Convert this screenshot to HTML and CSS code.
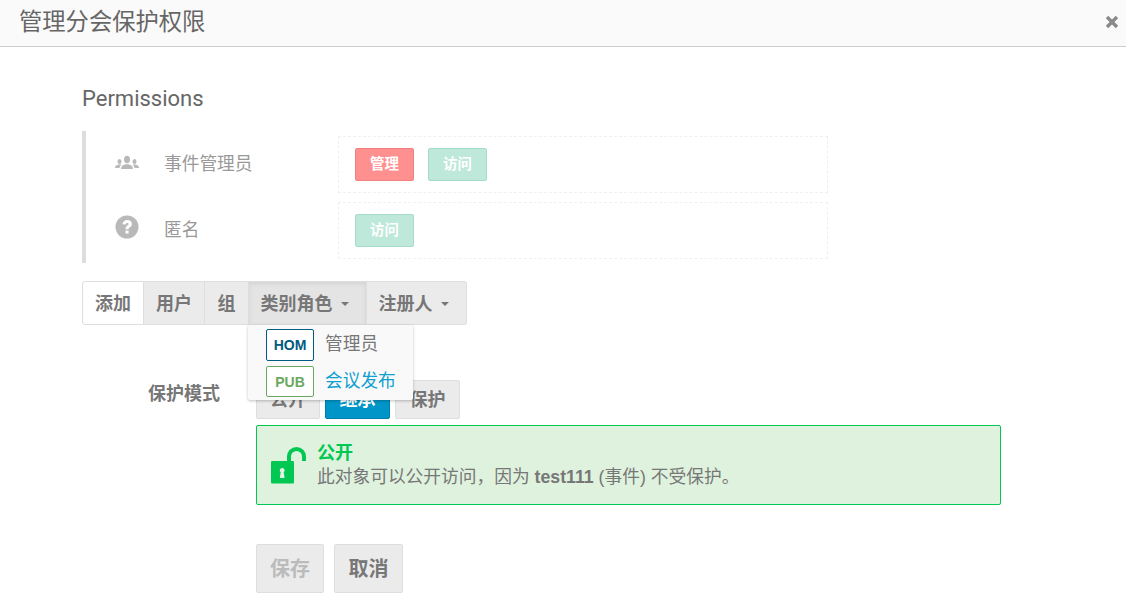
FILE: index.html
```html
<!DOCTYPE html>
<html lang="zh">
<head>
<meta charset="utf-8">
<title>管理分会保护权限</title>
<link rel="stylesheet" href="styles.css">
</head>
<body>
<header class="top">
  <h1 class="top-title">管理分会保护权限</h1>
  <span class="top-close">
    <svg width="14" height="14" viewBox="0 0 14 14"><path d="M3.2 .8 7 4.6 10.8 .8 13.2 3.2 9.4 7 13.2 10.8 10.8 13.2 7 9.4 3.2 13.2 .8 10.8 4.6 7 .8 3.2Z" fill="#8a8a8a"/></svg>
  </span>
</header>
<main class="body">
  <h2 class="perm-title">Permissions</h2>
  <div class="perm-list">
    <div class="perm-row">
      <span class="perm-icon">
        <svg width="24" height="16" viewBox="0 0 24 16"><g fill="#b9b9b9"><ellipse cx="12" cy="4.500" rx="3" ry="3.800"/><path d="M6 14c0-2.800 1.500-3.600 4.500-4.700h3c3 1.100 4.500 1.900 4.500 4.700Z"/><ellipse cx="4.500" cy="6.500" rx="2" ry="2.600"/><path d="M0 13c0-2 1-2.600 3.200-3.500h2.300l.9.700C5 11 4.500 11.800 4.500 13Z"/><ellipse cx="19.500" cy="6.500" rx="2" ry="2.600"/><path d="M24 13c0-2-1-2.600-3.200-3.500h-2.300l-.9.700c1.400.8 1.900 1.600 1.900 2.800Z"/></g></svg>
      </span>
      <span class="perm-name">事件管理员</span>
      <div class="perm-box">
        <span class="tag tag-red">管理</span>
        <span class="tag tag-green">访问</span>
      </div>
    </div>
    <div class="perm-row">
      <span class="perm-icon">
        <svg width="24" height="24" viewBox="0 0 24 24"><circle cx="12" cy="12" r="11.500" fill="#b9b9b9"/><path d="M7.500 9.300C7.800 6.600 9.600 5 12.300 5c2.700 0 4.600 1.600 4.600 3.900 0 1.700-.9 2.600-2.100 3.400-.9.600-1.200 1-1.200 1.900h-3.100c0-1.800.5-2.700 1.900-3.600.8-.5 1.200-.9 1.200-1.500 0-.7-.6-1.200-1.400-1.200-.9 0-1.500.6-1.600 1.700ZM10.500 15.600h3.100v3h-3.100Z" fill="#fff"/></svg>
      </span>
      <span class="perm-name">匿名</span>
      <div class="perm-box">
        <span class="tag tag-green">访问</span>
      </div>
    </div>
  </div>

  <div class="toolbar">
    <span class="tool tool-label">添加</span>
    <span class="tool tool-user">用户</span>
    <span class="tool tool-group">组</span>
    <span class="tool tool-open">类别角色<i class="caret"></i>
      <div class="menu">
        <div class="menu-item"><span class="chip chip-blue">HOM</span><span class="menu-text">管理员</span></div>
        <div class="menu-item"><span class="chip chip-green">PUB</span><span class="menu-text menu-link">会议发布</span></div>
      </div>
    </span>
    <span class="tool tool-reg">注册人<i class="caret"></i></span>
  </div>

  <div class="mode">
    <div class="mode-label">保护模式</div>
    <div class="mode-main">
      <div class="mode-buttons">
        <span class="mode-btn mode-first">公开</span>
        <span class="mode-btn mode-active">继承</span>
        <span class="mode-btn">保护</span>
      </div>
      <div class="notice">
        <svg class="notice-icon" width="37" height="37" viewBox="0 0 37 37"><rect x="1" y="14" width="23" height="22.500" rx="1" fill="#00c853"/><path d="M19 15V9.500a7.500 7.500 0 0 1 15 0V14" fill="none" stroke="#00c853" stroke-width="4"/><path d="M12.200 21a2.400 2.400 0 0 1 1.500 4.300L14.600 31H9.800l.9-5.700A2.400 2.400 0 0 1 12.200 21Z" fill="#e4f4e4"/></svg>
        <div class="notice-text">
          <div class="notice-title">公开</div>
          <div class="notice-desc">此对象可以公开访问，因为 <strong>test111</strong> (事件) 不受保护。</div>
        </div>
      </div>
      <div class="actions">
        <span class="act act-disabled">保存</span>
        <span class="act">取消</span>
      </div>
    </div>
  </div>
</main>
</body>
</html>
```

FILE: styles.css
```css
* { box-sizing: border-box; }
html, body { margin: 0; padding: 0; }
body {
  width: 1126px;
  height: 616px;
  overflow: hidden;
  background: #fff;
  color: #777;
  font-family: "Liberation Sans", "Noto Sans CJK SC", sans-serif;
}
.top {
  height: 47px;
  background: #fafafa;
  border-bottom: 1px solid #ccc;
  padding: 0 7px 0 19px;
  display: flex;
  align-items: center;
  justify-content: space-between;
}
.top-title {
  margin: 0 0 3px;
  font-size: 23.300px;
  line-height: 40px;
  font-weight: 400;
  color: #666;
}
.top-close { display: flex; margin-top: -3px; }
.body { padding: 38px 0 0 82px; }
.perm-title {
  margin: 0 0 18px;
  font-family: Roboto, sans-serif;
  font-size: 22px;
  line-height: 28px;
  font-weight: 400;
  color: #666;
}
.perm-list {
  width: 746px;
  height: 132px;
  border-left: 4px solid #ddd;
  padding: 5px 0 0 29px;
  display: flex;
  flex-direction: column;
  gap: 9px;
}
.perm-row { display: flex; align-items: center; height: 57px; }
.perm-icon { width: 24px; display: flex; justify-content: center; margin-top: -4px; }
.perm-row:last-child .perm-icon { margin-top: -8px; }
.perm-name {
  width: 174px;
  margin: 0 0 5px 25px;
  font-size: 17.700px;
  color: #999;
}
.perm-box {
  width: 490px;
  height: 57px;
  border: 1px dashed #f0f0f0;
  padding: 11px 16px;
  display: flex;
  gap: 14px;
}
.tag {
  width: 59px;
  height: 33px;
  padding-bottom: 5px;
  border-radius: 2px;
  border: 1px solid;
  color: #fff;
  font-size: 14.400px;
  font-weight: 700;
  display: flex;
  align-items: center;
  justify-content: center;
}
.tag-red { background: #ff9090; border-color: #f08080; }
.tag-green { background: #bde8da; border-color: #a5dcc8; }
.toolbar {
  display: flex;
  width: max-content;
  height: 44px;
  margin-top: 18px;
  border-radius: 3px;
  font-size: 18px;
  font-weight: 700;
  color: #777;
}
.tool {
  position: relative;
  display: flex;
  align-items: center;
  justify-content: center;
  padding-bottom: 3px;
  background: #ebebeb;
  border: 1px solid #dedede;
  border-left: 0;
}
.tool-label { width: 62px; background: #fff; border-left: 1px solid #dedede; border-radius: 3px 0 0 3px; }
.tool-user { width: 61px; }
.tool-group { width: 44px; }
.tool-open { width: 118px; padding-right: 6px; background: #e4e4e4; box-shadow: inset 0 2px 4px rgba(0,0,0,.08); }
.tool-reg { width: 100px; padding-right: 6px; border-radius: 0 3px 3px 0; }
.caret {
  width: 0;
  height: 0;
  margin: 4px 0 0 8px;
  border: 4px solid transparent;
  border-top-color: #777;
  border-bottom: 0;
}
.menu {
  position: absolute;
  z-index: 5;
  left: -1px;
  top: 43px;
  width: 165px;
  height: 75px;
  padding: 4px 0 0 18px;
  background: #f9f9f9;
  border-radius: 2px;
  box-shadow: 0 1px 3px rgba(0,0,0,.25);
  font-weight: 400;
}
.menu-item { display: flex; align-items: center; gap: 10px; height: 37px; }
.menu-item:first-child { height: 32px; margin-bottom: 5px; }
.menu-item:last-child { height: 31px; }
.chip {
  width: 48px;
  height: 100%;
  background: #fff;
  border: 1px solid;
  border-radius: 2px;
  font-size: 14px;
  font-weight: 700;
  display: flex;
  align-items: center;
  justify-content: center;
}
.chip-blue { color: #005a82; border-color: #005a82; }
.chip-green { color: #6aa85f; border-color: #6aa85f; }
.menu-text { margin: 0 0 6px 1px; font-size: 17.700px; color: #777; }
.menu-link { color: #0f9fd0; }
.mode { display: flex; margin-top: 55px; }
.mode-label {
  width: 174px;
  padding: 3px 36px 0 0;
  text-align: right;
  font-size: 18px;
  font-weight: 700;
  line-height: 22px;
}
.mode-main { width: 745px; }
.mode-buttons { display: flex; gap: 5px; }
.mode-btn {
  width: 65px;
  height: 39px;
  padding-bottom: 4px;
  background: #ebebeb;
  border: 1px solid #dedede;
  border-radius: 2px;
  font-size: 18px;
  font-weight: 700;
  display: flex;
  align-items: center;
  justify-content: center;
}
.mode-first { width: 64px; }
.mode-active { background: #0095c8; border-color: #007eaa; color: #fff; }
.notice {
  margin-top: 6px;
  height: 80px;
  background: #dff2de;
  border: 1px solid #00c853;
  border-radius: 2px;
  display: flex;
  align-items: center;
  padding: 0 0 0 13px;
  gap: 10px;
}
.notice-icon { flex: none; margin-top: 1px; }
.notice-text { padding-top: 1px; }
.notice-title { color: #00c853; font-size: 18px; font-weight: 700; line-height: 23px; }
.notice-desc { font-size: 17.730px; line-height: 25px; }
.notice-desc strong { font-weight: 700; }
.actions { display: flex; gap: 10px; margin-top: 39px; }
.act {
  width: 69px;
  height: 49px;
  padding-bottom: 2px;
  background: #ebebeb;
  border: 1px solid #dedede;
  border-radius: 2px;
  font-size: 20px;
  font-weight: 700;
  display: flex;
  align-items: center;
  justify-content: center;
}
.act-disabled { color: #bbb; width: 68px; }
```
